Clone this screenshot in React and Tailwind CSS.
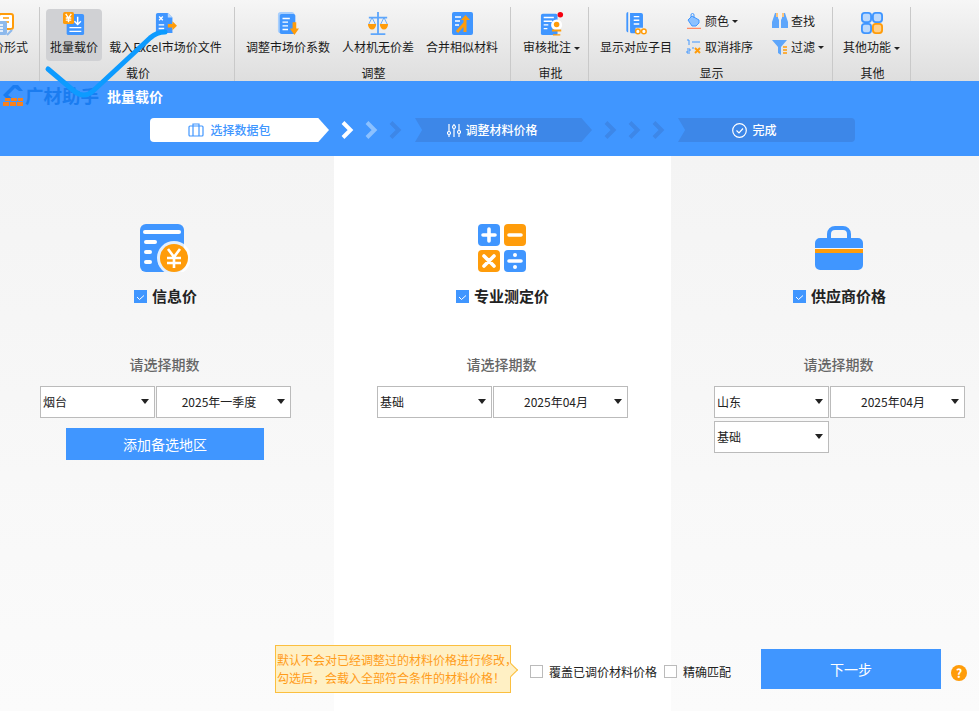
import React from "react";

const blue = "#4096ff";
const orange = "#ff9c0a";

const Yuan = ({ x, y, s = 1, color = "#fff" }) => (
  <path
    transform={`translate(${x} ${y}) scale(${s})`}
    d="M-4-6-0 0 4-6M-4 0H4M-4 3H4M0 0V6"
    fill="none"
    stroke={color}
    strokeWidth="2"
  />
);

const icons = {
  form: (
    <svg width="22" height="26" viewBox="-7 0 22 26" className="shrink-0">
      <rect x="0" y="1" width="14" height="15" rx="2" fill="#fff" stroke={orange} strokeWidth="2" />
      <path d="M4 5h6M4 9h6" stroke={orange} strokeWidth="1.500" />
      <rect x="-7" y="8" width="15" height="14" rx="2" fill="#8db9ec" />
      <path d="M-4 12h8M-4 15h8M-4 18h8" stroke="#fff" strokeWidth="1.500" />
      <path d="M8 22l5-5" stroke="#8db9ec" strokeWidth="2" />
    </svg>
  ),
  batch: (
    <svg width="22" height="24" viewBox="0 0 24 26">
      <rect x="4" y="2" width="19" height="23" rx="2" fill={blue} />
      <path d="M7 17h13M7 21h13" stroke="#fff" strokeWidth="1.400" />
      <path d="M16 5v8M12.500 10l3.500 3.500 3.500-3.500" fill="none" stroke="#fff" strokeWidth="1.600" />
      <rect x="0" y="0" width="12" height="13" rx="2" fill={orange} />
      <Yuan x={6} y={6.5} s={0.75} />
    </svg>
  ),
  excel: (
    <svg width="24" height="22" viewBox="0 0 24 24">
      <path d="M1 3a2 2 0 0 1 2-2h11l5 5v17H3a2 2 0 0 1-2-2z" fill={blue} />
      <path d="M14 1v5h5z" fill="#b7d6fb" />
      <path d="M4.500 5l4 4M8.500 5l-4 4" stroke="#fff" strokeWidth="1.500" />
      <path d="M4 14h6M4 18h6" stroke="#fff" strokeWidth="1.500" />
      <path d="M14 13h5v-3l5 5-5 5v-3h-5z" fill={orange} />
    </svg>
  ),
  coef: (
    <svg width="22" height="24" viewBox="0 0 24 26">
      <rect x="1" y="0" width="18" height="23" rx="3" fill="#a9cffc" />
      <rect x="3" y="2" width="17" height="22" rx="2" fill={blue} />
      <path d="M6 7h8M6 11h6M6 15h6M6 19h6" stroke="#fff" strokeWidth="1.500" />
      <path d="M17 11h4v7h3l-5 7-5-7h3z" fill={orange} />
    </svg>
  ),
  scale: (
    <svg width="22" height="24" viewBox="0 0 24 26">
      <path d="M12 0v23M2 6h20M4 24h16" stroke="#5ea6fb" strokeWidth="2" fill="none" />
      <path d="M1 13h9a4.500 6 0 0 1-9 0zM14 13h9a4.500 6 0 0 1-9 0z" fill={orange} />
      <path d="M5.500 6 2 13M5.500 6 9 13M18.500 6 15 13M18.500 6 22 13" stroke="#5ea6fb" fill="none" />
    </svg>
  ),
  merge: (
    <svg width="21" height="24" viewBox="0 0 21 24">
      <rect x="0" y="0" width="21" height="23" rx="2" fill={blue} />
      <path d="M3 5h6M3 9h5M3 13h4" stroke="#fff" strokeWidth="1.500" />
      <path d="M5 20l8-9V7M13 20V8" fill="none" stroke={orange} strokeWidth="3" />
      <path d="M9 8l4.500-5L18 8z" fill={orange} />
    </svg>
  ),
  audit: (
    <svg width="24" height="24" viewBox="0 0 24 26">
      <rect x="0" y="2" width="18" height="23" rx="2" fill={blue} />
      <path d="M3 6h11M3 10h9M3 14h5M3 18h4" stroke="#fff" strokeWidth="1.500" />
      <circle cx="21" cy="3" r="3" fill="#f5000f" />
      <circle cx="17" cy="14" r="6" fill="#fff" />
      <circle cx="17" cy="13.500" r="3" fill={orange} />
      <path d="M12 19h10v2H12zM13 24h8v1.500h-8z" fill={orange} />
    </svg>
  ),
  sub: (
    <svg width="23" height="24" viewBox="0 0 24 26">
      <path d="M1 2a2 2 0 0 1 2-2v22c-1 0-2-1-2-2z" fill={blue} />
      <path d="M5 1h12a2 2 0 0 1 2 2v14h-8v6H7a2 2 0 0 1-2-2z" fill={blue} />
      <path d="M9 5h6M9 9h6M9 13h6" stroke="#fff" strokeWidth="1.500" />
      <circle cx="13.500" cy="21" r="2.500" fill="#fff" stroke={orange} strokeWidth="1.600" />
      <circle cx="20" cy="21" r="2.500" fill="#fff" stroke={orange} strokeWidth="1.600" />
    </svg>
  ),
  color: (
    <svg width="16" height="16" viewBox="0 0 16 16">
      <path d="M2 7 6 3l7 4v3l-3 3H6z" fill="#8cc1ff" stroke={blue} />
      <path d="M5 4V2a1.500 1.500 0 0 1 3 0v3" fill="none" stroke={blue} />
      <path d="M1 15.500h14" stroke="#ff8a65" strokeWidth="1.500" />
    </svg>
  ),
  sort: (
    <svg width="16" height="16" viewBox="0 0 16 16">
      <path d="M1 1h2v5M6 3h8M1 10h3v2H1v2h3" fill="none" stroke={blue} />
      <path d="M9 9l5 5M14 9l-5 5" stroke={orange} strokeWidth="2" />
      <path d="M6 9h2" stroke={blue} />
    </svg>
  ),
  find: (
    <svg width="16" height="16" viewBox="0 0 16 16">
      <path d="M3 0h3v5l1 2v8H0V9z" fill="#5ea6fb" />
      <path d="M13 0h-3v5L9 7v8h7V9z" fill="#5ea6fb" />
      <path d="M4 0h2v4H4zM10 0h2v4h-2z" fill="#ffc57a" />
    </svg>
  ),
  filter: (
    <svg width="16" height="16" viewBox="0 0 16 16">
      <path d="M0 1h15L9 8v8L6 14V8z" fill="#5ea6fb" />
      <path d="M11 8h4M11 11h4M11 14h4" stroke={orange} strokeWidth="1.300" />
    </svg>
  ),
  more: (
    <svg width="22" height="22" viewBox="0 0 24 24">
      <rect x="1" y="1" width="10" height="10" rx="3" fill="#bcd9fc" stroke={blue} strokeWidth="2" />
      <rect x="13" y="1" width="10" height="10" rx="3" fill="#bcd9fc" stroke={blue} strokeWidth="2" />
      <rect x="1" y="13" width="10" height="10" rx="3" fill="#bcd9fc" stroke={blue} strokeWidth="2" />
      <rect x="13" y="13" width="10" height="10" rx="3" fill="#ffd08a" stroke={orange} strokeWidth="2" />
    </svg>
  ),
};

const Caret = () => <span className="ml-[3px] inline-block border-x-[3px] border-t-[3px] border-x-transparent border-t-[#222] align-middle" />;

// big ribbon button, icon on top and label under it
const BigBtn = ({ icon, label, caret, active, className = "" }) => (
  <div className={`flex h-[52px] flex-col items-center rounded-sm ${active ? "bg-[#d0d1d4]" : ""} ${className}`}>
    <div className="mt-[3px] flex h-[26px] items-start justify-center">{icon}</div>
    <div className="whitespace-nowrap leading-[18px]">
      {label}
      {caret && <Caret />}
    </div>
  </div>
);

const SmallBtn = ({ icon, label, caret }) => (
  <div className="flex h-[26px] shrink-0 items-center whitespace-nowrap">
    {icon}
    <span className="ml-[3px]">{label}</span>
    {caret && <Caret />}
  </div>
);

const Group = ({ title, width, children, className = "" }) => (
  <div className="flex h-full shrink-0 flex-col border-r border-[#c9c9c9]" style={{ width }}>
    <div className={`flex h-[54px] pt-[2px] ${className}`}>{children}</div>
    <div className="mt-[3px] pl-[2px] text-center leading-[18px]">{title}</div>
  </div>
);

const Ribbon = () => (
  <div className="h-[81px] shrink-0 bg-linear-to-b from-[#f6f6f6] to-[#dedede] pt-[7px] text-xs text-[#1a1a1a]">
    <div className="flex h-[74px]">
      <Group width="40px" className="overflow-hidden">
        <div className="-ml-[10px] w-[38px] shrink-0 text-right">
          <div className="flex h-[29px] justify-end pr-[14px] pt-[4px]">{icons.form}</div>
          <div className="whitespace-nowrap leading-[18px]">价形式</div>
        </div>
      </Group>
      <Group title="载价" width="195px" className="gap-[7px] pl-[6px]">
        <BigBtn icon={icons.batch} label="批量载价" active className="w-[56px]" />
        <BigBtn icon={icons.excel} label="载入Excel市场价文件" className="w-[113px]" />
      </Group>
      <Group title="调整" width="276px" className="gap-[12px] pl-[11px]">
        <BigBtn icon={icons.coef} label="调整市场价系数" />
        <BigBtn icon={icons.scale} label="人材机无价差" />
        <BigBtn icon={icons.merge} label="合并相似材料" />
      </Group>
      <Group title="审批" width="78px" className="pl-[12px]">
        <BigBtn icon={icons.audit} label="审核批注" caret />
      </Group>
      <Group title="显示" width="244px" className="pl-[11px]">
        <BigBtn icon={icons.sub} label="显示对应子目" />
        <div className="-mt-px ml-[14px] flex w-[86px] flex-col">
          <SmallBtn icon={icons.color} label="颜色" caret />
          <SmallBtn icon={icons.sort} label="取消排序" />
        </div>
        <div className="-mt-px flex flex-col">
          <SmallBtn icon={icons.find} label="查找" />
          <SmallBtn icon={icons.filter} label="过滤" caret />
        </div>
      </Group>
      <Group title="其他" width="78px" className="pl-[10px]">
        <BigBtn icon={icons.more} label="其他功能" caret />
      </Group>
    </div>
  </div>
);

const Chevron = ({ color }) => (
  <svg width="14" height="18" viewBox="0 0 14 18" className="shrink-0">
    <path d="M2 1.500 9.500 9 2 16.500" fill="none" stroke={color} strokeWidth="4" />
  </svg>
);

const Header = () => (
  <div className="h-[75px] shrink-0 bg-[#4096ff] pt-[3px]">
    <div className="flex h-[24px] items-center pl-[2px]">
      <svg width="22" height="22" viewBox="0 0 22 22" className="shrink-0">
        <path d="M1 10 11 0h5l5 6h-4l-4-3-7 7 4 3H4z" fill="#1b7cf0" />
        <path d="M3 13h5v3H3zM9 13h6v3H9zM16 13h5v3h-5zM1 17h6v4H1zM8 17h6v4H8zM15 17h6v4h-6z" fill="#f7811e" />
      </svg>
      <span className="ml-px w-[78px] whitespace-nowrap text-[18.500px] font-bold text-[#1a7cf0]">广材助手</span>
      <span className="ml-[4px] text-[14px] font-bold text-white">批量载价</span>
    </div>
    <div className="mt-[10px] flex h-[24px] items-center pl-[150px]">
      <div className="flex h-full w-[179px] items-center justify-center gap-[6px] rounded-l-sm bg-white pr-[20px] text-xs font-medium text-[#4096ff] [clip-path:polygon(0_0,94%_0,100%_50%,94%_100%,0_100%)]">
        <svg width="16" height="14" viewBox="0 0 16 14" fill="none" stroke="#4096ff" strokeWidth="1.200">
          <rect x="1" y="3" width="14" height="10" rx="1" />
          <path d="M5 3V1h6v2M5 3v10M11 3v10" />
        </svg>
        选择数据包
      </div>
      <div className="ml-[12px] flex gap-[10px]">
        <Chevron color="#fff" />
        <Chevron color="#8cc1ff" />
        <Chevron color="#3d87e8" />
      </div>
      <div className="ml-[12px] flex h-full w-[177px] items-center justify-center gap-[4px] bg-[#3d87e8] pr-[22px] text-xs font-medium text-white [clip-path:polygon(0_0,94%_0,100%_50%,94%_100%,0_100%,4%_50%)]">
        <svg width="14" height="15" viewBox="0 0 14 15" fill="none" stroke="#fff" strokeWidth="1.200">
          <path d="M2 1v13M7 1v13M12 1v13" />
          <circle cx="2" cy="10" r="1.500" fill="#3d87e8" />
          <circle cx="7" cy="4" r="1.500" fill="#3d87e8" />
          <circle cx="12" cy="9" r="1.500" fill="#3d87e8" />
        </svg>
        调整材料价格
      </div>
      <div className="ml-[12px] flex gap-[10px]">
        <Chevron color="#3d87e8" />
        <Chevron color="#3d87e8" />
        <Chevron color="#3d87e8" />
      </div>
      <div className="ml-[12px] flex h-full w-[177px] items-center justify-center gap-[5px] rounded-r-sm bg-[#3d87e8] pr-[24px] text-xs font-medium text-white [clip-path:polygon(0_0,100%_0,100%_100%,0_100%,4%_50%)]">
        <svg width="15" height="15" viewBox="0 0 15 15" fill="none" stroke="#fff" strokeWidth="1.200">
          <circle cx="7.500" cy="7.500" r="6.800" />
          <path d="M4.500 7.500 7 10l4-4.500" />
        </svg>
        完成
      </div>
    </div>
  </div>
);

const Tick = () => (
  <svg width="13" height="13" viewBox="0 0 13 13" className="shrink-0 bg-[#4096ff]">
    <path d="M3 7l2.500 2.500 4.500-4" fill="none" stroke="#fff" strokeWidth="1" />
  </svg>
);

const Dropdown = ({ value, center, className = "" }) => (
  <div className={`relative flex h-[32px] items-center border border-[#bbb] bg-white text-xs text-[#222] ${center ? "justify-center pr-[9px]" : "pl-[2px]"} ${className}`}>
    {value}
    <span className="absolute right-[5px] top-[12px] border-x-[4px] border-t-[5px] border-x-transparent border-t-[#222]" />
  </div>
);

const Column = ({ icon, title, bg, offset, children }) => (
  <div className={bg}>
    <div className={`flex w-[251px] flex-col ${offset}`}>
      <div className="mx-auto mt-[68px] flex h-[48px] items-center justify-center pr-px">{icon}</div>
      <div className="mt-[13px] flex h-[22px] items-center justify-center gap-[5px] text-[15px] font-bold text-[#222]">
        <Tick />
        {title}
      </div>
      <div className="mt-[47px] h-[20px] pr-[2px] text-center text-[14px] font-medium leading-[20px] text-[#666]">请选择期数</div>
      <div className="mt-[12px] flex flex-wrap gap-x-px gap-y-[3px]">{children}</div>
    </div>
  </div>
);

const infoIcon = (
  <svg width="50" height="48" viewBox="0 0 50 48">
    <rect x="0" y="0" width="44" height="48" rx="6" fill={blue} />
    <path d="M5 8h34" stroke="#fff" strokeWidth="4" strokeLinecap="round" />
    <path d="M6 18h9M6 28h4M6 38h4" stroke="#fff" strokeWidth="4" strokeLinecap="round" />
    <circle cx="34" cy="34" r="17" fill="#fff" opacity=".85" />
    <circle cx="34" cy="34" r="14" fill={orange} />
    <path d="M28 25l6 8 6-8M27 34h14M27 39h14M34 33v11" fill="none" stroke="#fff" strokeWidth="2.600" />
  </svg>
);

const calcIcon = (
  <svg width="48" height="48" viewBox="0 0 48 48">
    <rect x="0" y="0" width="22" height="22" rx="4" fill={blue} />
    <rect x="26" y="0" width="22" height="22" rx="4" fill={orange} />
    <rect x="0" y="26" width="22" height="22" rx="4" fill={orange} />
    <rect x="26" y="26" width="22" height="22" rx="4" fill={blue} />
    <path d="M5 11h12M11 5v12M31 11h12M6 32l10 10M16 32 6 42M31 37h12" stroke="#fff" strokeWidth="3.600" strokeLinecap="round" />
    <circle cx="37" cy="31" r="2" fill="#fff" />
    <circle cx="37" cy="43" r="2" fill="#fff" />
  </svg>
);

const bagIcon = (
  <svg width="48" height="44" viewBox="0 0 48 44">
    <path d="M14 14V8a6 6 0 0 1 6-6h8a6 6 0 0 1 6 6v6" fill="none" stroke={blue} strokeWidth="4" />
    <path d="M0 17a5 5 0 0 1 5-5h38a5 5 0 0 1 5 5v5H0zM0 27h48v12a5 5 0 0 1-5 5H5a5 5 0 0 1-5-5z" fill={blue} />
    <rect x="0" y="23" width="48" height="4" fill={orange} />
  </svg>
);

const Box = () => <span className="h-[13px] w-[13px] shrink-0 border border-[#bbb] bg-white" />;

const Footer = () => (
  <div className="absolute bottom-[18px] left-[275px] flex items-center text-xs text-[#222]">
    <div className="relative h-[48px] w-[236px] whitespace-nowrap border border-[#fbbf3f] bg-[#fff0c4] pl-[1px] pt-[5px] leading-[18px] text-[#ff9c1a]">
      <div>默认不会对已经调整过的材料价格进行修改，</div>
      <div>勾选后，会载入全部符合条件的材料价格！</div>
      <span className="absolute right-[-6px] top-[19px] h-[10px] w-[10px] rotate-45 border-r border-t border-[#fbbf3f] bg-[#fff0c4]" />
    </div>
    <div className="ml-[19px] mt-[5px] flex items-center gap-[6px]">
      <Box />
      <span className="mr-px">覆盖已调价材料价格</span>
      <Box />
      <span>精确匹配</span>
    </div>
    <div className="ml-[30px] flex h-[40px] w-[180px] items-center justify-center bg-[#4096ff] text-sm text-white">下一步</div>
    <div className="ml-[10px] mt-[8px] flex h-[16px] w-[16px] items-center justify-center rounded-full bg-[#ff9c0a] text-xs font-bold text-white">?</div>
  </div>
);

export default function App() {
  const sideBg = "bg-linear-to-b from-[#f4f4f4] to-[#fbfbfb]";
  return (
    <div className="relative flex h-[711px] w-[979px] flex-col overflow-hidden bg-white font-['Noto_Sans_CJK_SC','Noto_Sans',sans-serif]">
      <Ribbon />
      <Header />
      <div className="grid flex-1 grid-cols-[334px_337px_308px]">
        <Column icon={infoIcon} title="信息价" bg={sideBg} offset="ml-[40px]">
          <Dropdown value="烟台" className="w-[115px]" />
          <Dropdown value="2025年一季度" center className="w-[135px]" />
          <div className="ml-[26px] mt-[7px] flex h-[32px] w-[198px] items-center justify-center bg-[#4096ff] text-sm text-white">添加备选地区</div>
        </Column>
        <Column icon={calcIcon} title="专业测定价" bg="bg-white" offset="ml-[43px]">
          <Dropdown value="基础" className="w-[115px]" />
          <Dropdown value="2025年04月" center className="w-[135px]" />
        </Column>
        <Column icon={bagIcon} title="供应商价格" bg={sideBg} offset="ml-[43px]">
          <Dropdown value="山东" className="w-[115px]" />
          <Dropdown value="2025年04月" center className="w-[135px]" />
          <Dropdown value="基础" className="w-[115px]" />
        </Column>
      </div>
      <Footer />

      {/* hand-drawn tick that sits over the ribbon and the logo */}
      <svg width="180" height="110" viewBox="0 0 180 110" className="pointer-events-none absolute left-0 top-0">
        <path d="M48 69 74 91Q84 99 93 91L150 38Q157 32 165 32" fill="none" stroke="#0d9bff" strokeWidth="5" strokeLinecap="round" />
      </svg>
    </div>
  );
}
